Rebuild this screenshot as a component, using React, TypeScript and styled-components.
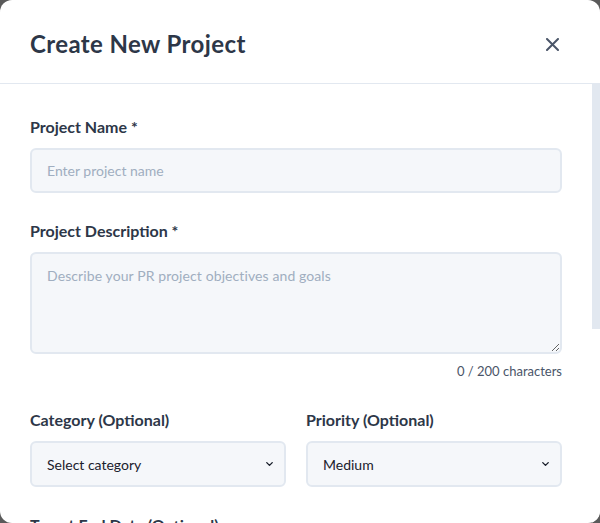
import styled, { createGlobalStyle } from "styled-components"
import { ChevronDown } from "lucide-react"

const GlobalStyle = createGlobalStyle`
  * {
    box-sizing: border-box;
  }
  html, body {
    margin: 0;
    height: 100%;
    background: #5a5a5a;
    font-family: Lato, "Noto Sans", "Liberation Sans", sans-serif;
  }
  #root {
    height: 100%;
  }
`

const Modal = styled.div`
  height: 100vh;
  width: 100%;
  background: #ffffff;
  border-radius: 12px;
  display: flex;
  flex-direction: column;
  overflow: hidden;
`

const Header = styled.header`
  height: 84px;
  flex-shrink: 0;
  display: flex;
  align-items: center;
  justify-content: space-between;
  padding: 4px 41px 0 30px;
  border-bottom: 1px solid #e2e8f0;

  h2 {
    margin: 0;
    font-size: 24px;
    letter-spacing: 0.4px;
    font-weight: 700;
    color: #2d3748;
  }
`

const CloseButton = styled.button`
  border: none;
  background: none;
  padding: 0;
  margin-top: 2px;
  cursor: pointer;
  color: #4a5568;
  display: flex;
`

const BodyWrap = styled.div`
  flex: 1;
  min-height: 0;
  display: flex;
`

const Body = styled.div`
  flex: 1;
  overflow: hidden;
  padding: 32px 30px 30px 30px;
`

const ScrollTrack = styled.div`
  width: 8px;
  flex-shrink: 0;
  background: #ffffff;
`

const ScrollThumb = styled.div`
  height: 245px;
  background: #e2e8f0;
`

const Field = styled.div`
  margin-bottom: 27px;
`

const Row = styled.div`
  display: grid;
  grid-template-columns: 1fr 1fr;
  gap: 20px;
`

const Label = styled.label`
  display: block;
  font-size: 16px;
  line-height: 22px;
  font-weight: 700;
  color: #2d3748;
  margin-bottom: 10px;
`

const inputBase = `
  width: 100%;
  border: 2px solid #e2e8f0;
  border-radius: 6px;
  background: #f5f7fa;
  font-family: Lato, "Noto Sans", "Liberation Sans", sans-serif;
  font-size: 14px;
  color: #1a202c;
  padding: 0 15px;
  outline: none;

  &::placeholder {
    color: #a0aec0;
  }
`

const TextInput = styled.input`
  ${inputBase}
  height: 45px;
`

const TextArea = styled.textarea`
  ${inputBase}
  display: block;
  height: 102px;
  padding-top: 12px;
  line-height: 20px;
  letter-spacing: 0.1px;
  resize: vertical;
`

const SelectWrap = styled.div`
  position: relative;

  svg {
    position: absolute;
    right: 11px;
    top: 50%;
    transform: translateY(-50%);
    color: #1a202c;
    pointer-events: none;
  }
`

const Select = styled.select`
  ${inputBase}
  height: 46px;
  appearance: none;
  padding: 0 30px 0 15px;
`

const Counter = styled.div`
  text-align: right;
  font-size: 13px;
  line-height: 21px;
  margin-top: 7px;
  color: #4a5568;
`

const Footer = styled.div`
  display: flex;
  justify-content: flex-end;
  gap: 12px;
  padding-top: 20px;
  border-top: 1px solid #e2e8f0;
`

const Button = styled.button<{ $primary?: boolean }>`
  padding: 12px 22px;
  border-radius: 6px;
  font-family: inherit;
  font-size: 15px;
  font-weight: 700;
  cursor: pointer;
  border: 2px solid ${(p) => (p.$primary ? "#3182ce" : "#e2e8f0")};
  background: ${(p) => (p.$primary ? "#3182ce" : "#ffffff")};
  color: ${(p) => (p.$primary ? "#ffffff" : "#4a5568")};
`

const App = () => {
  return (
    <>
      <GlobalStyle />
      <Modal>
        <Header>
          <h2>Create New Project</h2>
          <CloseButton aria-label="Close">
            <svg width="13" height="13" viewBox="0 0 13 13" fill="none">
              <path d="M1 1l11 11M12 1L1 12" stroke="currentColor" strokeWidth="2" strokeLinecap="round" />
            </svg>
          </CloseButton>
        </Header>
        <BodyWrap>
          <Body>
            <Field>
              <Label>Project Name *</Label>
              <TextInput placeholder="Enter project name" />
            </Field>
            <Field>
              <Label>Project Description *</Label>
              <TextArea placeholder="Describe your PR project objectives and goals" />
              <Counter>0 / 200 characters</Counter>
            </Field>
            <Row>
              <Field>
                <Label>Category (Optional)</Label>
                <SelectWrap>
                  <Select defaultValue="">
                    <option value="">Select category</option>
                    <option value="media">Media Relations</option>
                    <option value="social">Social Media</option>
                    <option value="events">Events</option>
                  </Select>
                  <ChevronDown size={11} strokeWidth={3} />
                </SelectWrap>
              </Field>
              <Field>
                <Label>Priority (Optional)</Label>
                <SelectWrap>
                  <Select defaultValue="medium">
                    <option value="low">Low</option>
                    <option value="medium">Medium</option>
                    <option value="high">High</option>
                  </Select>
                  <ChevronDown size={11} strokeWidth={3} />
                </SelectWrap>
              </Field>
            </Row>
            <Field>
              <Label>Target End Date (Optional)</Label>
              <TextInput type="date" />
            </Field>
            <Footer>
              <Button>Cancel</Button>
              <Button $primary>Create Project</Button>
            </Footer>
          </Body>
          <ScrollTrack>
            <ScrollThumb />
          </ScrollTrack>
        </BodyWrap>
      </Modal>
    </>
  )
}

export default App
